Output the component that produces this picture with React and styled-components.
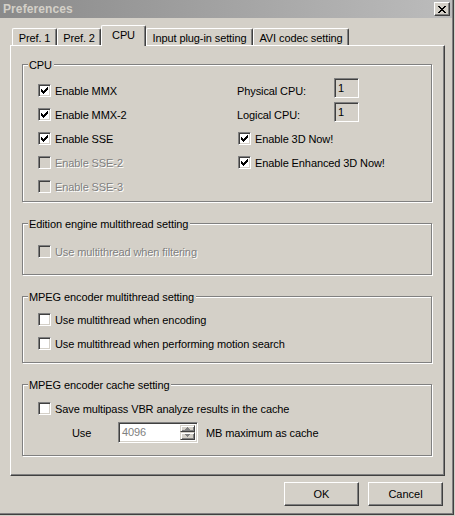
import styled, { createGlobalStyle } from 'styled-components';

const GlobalStyle = createGlobalStyle`
  html, body {
    margin: 0;
    padding: 0;
    background: #d4d0c8;
  }
  * {
    box-sizing: border-box;
  }
`;

function CheckMark() {
  // classic 7x7 tick, drawn column by column
  const cols = [2, 3, 4, 3, 2, 1, 0];
  return (
    <svg width="7" height="7" viewBox="0 0 7 7" shapeRendering="crispEdges">
      {cols.map((y, x) => (
        <rect key={x} x={x} y={y} width="1" height="3" fill="#000" />
      ))}
    </svg>
  );
}

function Check({ checked, disabled, children }) {
  return (
    <Row>
      <CheckBox $disabled={disabled}>{checked && <CheckMark />}</CheckBox>
      <Label $disabled={disabled}>{children}</Label>
    </Row>
  );
}

function Arrow({ up }) {
  return (
    <svg width="5" height="3" viewBox="0 0 5 3" shapeRendering="crispEdges">
      <path d={up ? 'M2 0h1v1h1v1h1v1H0V2h1V1h1z' : 'M0 0h5v1H4v1H3v1H2V2H1V1H0z'} fill="#808080" />
    </svg>
  );
}

function App() {
  return (
    <>
      <GlobalStyle />
      <Window>
        <TitleBar>
          <Title>Preferences</Title>
          <CloseButton>
            <svg width="8" height="7" viewBox="0 0 8 7" shapeRendering="crispEdges">
              <path
                d="M0 0h2v1h1v1h2V1h1V0h2v1H7v1H6v1H5v1h1v1h1v1h1v1H6V6H5V5H3v1H2v1H0V6h1V5h1V4h1V3H2V2H1V1H0z"
                fill="#000"
              />
            </svg>
          </CloseButton>
        </TitleBar>
        <Body>
          <TabStrip>
            <Tab $w={45}>Pref. 1</Tab>
            <Tab $w={44}>Pref. 2</Tab>
            <Tab $w={45} $active>CPU</Tab>
            <Tab $w={107}>Input plug-in setting</Tab>
            <Tab $w={96}>AVI codec setting</Tab>
          </TabStrip>
          <Panel>
            <Group $pt={13} $pb={3}>
              <Legend>CPU</Legend>
              <CpuGrid>
                <Column>
                  <Check checked>Enable MMX</Check>
                  <Check checked>Enable MMX-2</Check>
                  <Check checked>Enable SSE</Check>
                  <Check disabled>Enable SSE-2</Check>
                  <Check disabled>Enable SSE-3</Check>
                </Column>
                <Column>
                  <Row>
                    <FieldLabel>Physical CPU:</FieldLabel>
                    <ReadOnlyBox>1</ReadOnlyBox>
                  </Row>
                  <Row>
                    <FieldLabel>Logical CPU:</FieldLabel>
                    <ReadOnlyBox>1</ReadOnlyBox>
                  </Row>
                  <Indent>
                    <Check checked>Enable 3D Now!</Check>
                    <Check checked>Enable Enhanced 3D Now!</Check>
                  </Indent>
                </Column>
              </CpuGrid>
            </Group>

            <Group $pt={15} $pb={11}>
              <Legend>Edition engine multithread setting</Legend>
              <Check disabled>Use multithread when filtering</Check>
            </Group>

            <Group $pt={10} $pb={7}>
              <Legend>MPEG encoder multithread setting</Legend>
              <Check>Use multithread when encoding</Check>
              <Check>Use multithread when performing motion search</Check>
            </Group>

            <Group $pt={11} $pb={11}>
              <Legend>MPEG encoder cache setting</Legend>
              <Check>Save multipass VBR analyze results in the cache</Check>
              <Row>
                <UseLabel>Use</UseLabel>
                <SpinBox>
                  <SpinText>4096</SpinText>
                  <SpinButtons>
                    <SpinButton><Arrow up /></SpinButton>
                    <SpinButton><Arrow /></SpinButton>
                  </SpinButtons>
                </SpinBox>
                <Label $gap={8}>MB maximum as cache</Label>
              </Row>
            </Group>
          </Panel>
          <ButtonRow>
            <PushButton>OK</PushButton>
            <PushButton>Cancel</PushButton>
          </ButtonRow>
        </Body>
      </Window>
    </>
  );
}

const Window = styled.div`
  width: 454px;
  height: 515px;
  background: #d4d0c8;
  border-right: 1px solid #404040;
  border-bottom: 1px solid #404040;
  box-shadow: inset -1px -1px 0 #808080;
  font-family: 'Liberation Sans', Arial, sans-serif;
  font-size: 11px;
  letter-spacing: -0.1px;
  color: #000;
  display: flex;
  flex-direction: column;
`;

const TitleBar = styled.div`
  display: flex;
  align-items: center;
  justify-content: space-between;
  height: 18px;
  margin-right: 1px;
  padding: 0 2px 0 3px;
  background: linear-gradient(to right, #8a8a8a, #bcbcbc);
`;

const Title = styled.span`
  font-weight: bold;
  font-size: 12px;
  color: #d4d0c8;
  letter-spacing: 0.1px;
`;

const CloseButton = styled.span`
  display: flex;
  align-items: center;
  justify-content: center;
  width: 16px;
  height: 14px;
  background: #d4d0c8;
  border: 1px solid;
  border-color: #fff #404040 #404040 #fff;
  box-shadow: inset -1px -1px 0 #808080;
`;

const Body = styled.div`
  flex: 1;
  display: flex;
  flex-direction: column;
  padding: 8px 8px 0 10px;
`;

const TabStrip = styled.div`
  display: flex;
  align-items: flex-end;
  height: 20px;
  padding-left: 2px;
  margin-bottom: -1px;
  position: relative;
  z-index: 1;
`;

const Tab = styled.div`
  width: ${({ $w }) => $w}px;
  height: ${({ $active }) => ($active ? 21 : 17)}px;
  margin-bottom: ${({ $active }) => ($active ? 0 : 1)}px;
  padding-top: 3px;
  text-align: center;
  white-space: nowrap;
  background: #d4d0c8;
  border-top: 1px solid #fff;
  border-left: 1px solid #fff;
  border-right: 1px solid #404040;
  border-radius: 2px 2px 0 0;
  box-shadow: inset -1px 0 0 #808080;
`;

const Panel = styled.div`
  height: 431px;
  display: flex;
  flex-direction: column;
  gap: 21px;
  padding: 18px 12px 0 11px;
  border: 1px solid;
  border-color: #fff #404040 #404040 #fff;
  box-shadow: inset -1px -1px 0 #808080;
`;

const Group = styled.div`
  position: relative;
  padding: ${({ $pt }) => $pt}px 0 ${({ $pb }) => $pb}px 15px;
  border: 1px solid #808080;
  box-shadow: inset 1px 1px 0 #fff, 1px 1px 0 #fff;
`;

const Legend = styled.span`
  position: absolute;
  top: -6px;
  left: 5px;
  padding: 0 2px 0 1px;
  line-height: 13px;
  background: #d4d0c8;
  white-space: nowrap;
`;

const CpuGrid = styled.div`
  display: grid;
  grid-template-columns: 199px 1fr;
`;

const Column = styled.div`
  display: flex;
  flex-direction: column;
`;

const Indent = styled.div`
  padding-left: 1px;
`;

const Row = styled.div`
  display: flex;
  align-items: center;
  height: 24px;
`;

const CheckBox = styled.span`
  display: flex;
  align-items: center;
  justify-content: center;
  flex-shrink: 0;
  width: 13px;
  height: 13px;
  border: 1px solid;
  border-color: #808080 #fff #fff #808080;
  box-shadow: inset 1px 1px 0 #404040, inset -1px -1px 0 #d4d0c8;
  background: ${({ $disabled }) => ($disabled ? '#d4d0c8' : '#fff')};
`;

const Label = styled.span`
  margin-left: ${({ $gap }) => $gap ?? 4}px;
  padding-top: 1px;
  white-space: nowrap;
  color: ${({ $disabled }) => ($disabled ? '#808080' : '#000')};
  text-shadow: ${({ $disabled }) => ($disabled ? '1px 1px 0 #fff' : 'none')};
`;

const FieldLabel = styled.span`
  width: 97px;
  padding-top: 1px;
  white-space: nowrap;
`;

const ReadOnlyBox = styled.span`
  align-self: flex-start;
  width: 25px;
  height: 20px;
  padding: 3px 0 0 3px;
  border: 1px solid;
  border-color: #808080 #fff #fff #808080;
  box-shadow: inset 1px 1px 0 #404040, inset -1px -1px 0 #d4d0c8;
`;

const UseLabel = styled.span`
  width: 46px;
  margin-left: 34px;
  padding-top: 1px;
`;

const SpinBox = styled.div`
  display: flex;
  width: 80px;
  height: 21px;
  padding: 2px;
  background: #fff;
  border: 1px solid;
  border-color: #808080 #fff #fff #808080;
  box-shadow: inset 1px 1px 0 #404040, inset -1px -1px 0 #d4d0c8;
`;

const SpinText = styled.span`
  flex: 1;
  padding: 1px 0 0 1px;
  color: #808080;
`;

const SpinButtons = styled.div`
  display: flex;
  flex-direction: column;
  width: 15px;
`;

const SpinButton = styled.span`
  flex: 1;
  display: flex;
  align-items: center;
  justify-content: center;
  background: #d4d0c8;
  border: 1px solid;
  border-color: #d4d0c8 #404040 #404040 #d4d0c8;
  box-shadow: inset 1px 1px 0 #fff, inset -1px -1px 0 #808080;
`;

const ButtonRow = styled.div`
  display: flex;
  justify-content: flex-end;
  gap: 9px;
  margin: 6px 2px 0 0;
`;

const PushButton = styled.button`
  width: 75px;
  height: 24px;
  padding: 0;
  font: inherit;
  color: #000;
  background: #d4d0c8;
  border: 1px solid;
  border-color: #fff #404040 #404040 #fff;
  box-shadow: inset -1px -1px 0 #808080;
  border-radius: 0;
`;

export default App;
